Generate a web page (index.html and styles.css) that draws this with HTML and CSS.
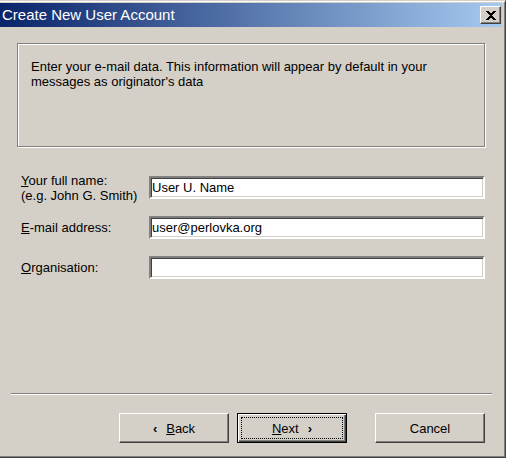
FILE: index.html
```html
<!DOCTYPE html>
<html lang="en">
<head>
    <meta charset="UTF-8">
    <title>Create New User Account</title>
    <link rel="stylesheet" href="styles.css">
</head>
<body>
    <div class="window">
        <div class="titlebar">
            <span class="title">Create New User Account</span>
            <button class="close" title="Close">
                <svg width="10" height="9" viewBox="0 0 10 9" shape-rendering="crispEdges">
                    <path d="M0 0h3v1h-3zM7 0h3v1h-3zM1 1h3v1h-3zM6 1h3v1h-3zM2 2h6v1h-6zM3 3h4v1h-4zM4 4h2v1h-2zM3 5h4v1h-4zM2 6h6v1h-6zM1 7h3v1h-3zM6 7h3v1h-3zM0 8h3v1h-3zM7 8h3v1h-3z" fill="#000"/>
                </svg>
            </button>
        </div>

        <div class="intro">
            Enter your e-mail data. This information will appear by default in your<br>
            messages as originator's data
        </div>

        <div class="form">
            <div class="row">
                <label class="label"><u>Y</u>our full name:<br>(e.g. John G. Smith)</label>
                <input class="field" type="text" value="User U. Name">
            </div>
            <div class="row">
                <label class="label"><u>E</u>-mail address:</label>
                <input class="field" type="text" value="user@perlovka.org">
            </div>
            <div class="row">
                <label class="label"><u>O</u>rganisation:</label>
                <input class="field" type="text" value="">
            </div>
        </div>

        <div class="footer">
            <div class="separator"></div>
            <div class="buttons">
                <button class="btn"><span class="arrow">&lsaquo;</span><u>B</u>ack</button>
                <button class="btn btn-default"><span class="focus"><u>N</u>ext<span class="arrow arrow-right">&rsaquo;</span></span></button>
                <button class="btn btn-cancel">Cancel</button>
            </div>
        </div>
    </div>
</body>
</html>
```

FILE: styles.css
```css
html, body {
    margin: 0;
    padding: 0;
}
body {
    width: 506px;
    height: 458px;
    overflow: hidden;
    background-color: #d4d0c8;
    font-family: 'Liberation Sans', Arial, sans-serif;
    font-size: 13px;
    color: #000;
}
.window {
    width: 506px;
    height: 458px;
    box-sizing: border-box;
    display: flex;
    flex-direction: column;
    padding-top: 2px;
    border-top: 1px solid #d4d0c8;
    border-right: 1px solid #404040;
    border-bottom: 1px solid #404040;
    box-shadow: inset 0 1px #fff, inset -1px -1px #808080;
}
.titlebar {
    height: 24px;
    margin-right: 3px;
    display: flex;
    align-items: center;
    justify-content: space-between;
    background: linear-gradient(to right, #0a246a, #a6caf0);
}
.title {
    padding-left: 2px;
    color: #fff;
    font-size: 15px;
    line-height: 24px;
    white-space: nowrap;
}
.close {
    width: 21px;
    height: 18px;
    margin-right: 1px;
    padding: 0;
    display: flex;
    align-items: center;
    justify-content: center;
    background-color: #d4d0c8;
    border: 1px solid;
    border-color: #fff #404040 #404040 #fff;
    box-shadow: inset -1px -1px #808080;
}
.close svg {
    display: block;
}
/* etched frame */
.intro {
    height: 104px;
    margin: 16px 0 0 17px;
    width: 468px;
    box-sizing: border-box;
    padding: 15px 10px 0 13px;
    border: 1px solid #808080;
    box-shadow: 1px 1px #fff, inset 1px 1px #fff;
    line-height: 15px;
    white-space: nowrap;
}
.form {
    margin-top: 29px;
    padding-left: 21px;
}
.row {
    height: 23px;
    display: flex;
    align-items: center;
    margin-bottom: 17px;
}
.label {
    width: 128px;
    flex: none;
    line-height: 15px;
}
.field {
    width: 336px;
    height: 23px;
    box-sizing: border-box;
    margin: 0;
    padding: 0 0 0 1px;
    font-family: inherit;
    font-size: 13px;
    color: #000;
    background-color: #fff;
    border: 2px solid;
    border-color: #808080 #fff #fff #808080;
    box-shadow: inset 1px 1px #404040, inset -1px -1px #d4d0c8;
    outline: none;
}
.footer {
    margin-top: auto;
    padding-bottom: 14px;
}
.separator {
    margin: 0 13px 0 11px;
    border-top: 1px solid #808080;
    border-bottom: 1px solid #fff;
}
.buttons {
    margin-top: 18px;
    padding-right: 20px;
    display: flex;
    justify-content: flex-end;
}
.btn {
    width: 110px;
    height: 30px;
    margin: 0 0 0 8px;
    padding: 0;
    display: flex;
    align-items: center;
    justify-content: center;
    font-family: inherit;
    font-size: 13px;
    color: #000;
    background-color: #d4d0c8;
    border: 1px solid;
    border-color: #fff #404040 #404040 #fff;
    box-shadow: inset -1px -1px #808080;
}
.btn-default {
    padding: 3px;
    border: 1px solid #000;
    box-shadow: inset 1px 1px #fff, inset -1px -1px #404040, inset -2px -2px #808080;
}
.btn-default .focus {
    flex: 1;
    align-self: stretch;
    display: flex;
    align-items: center;
    justify-content: center;
    border: 1px dotted #000;
}
.btn-cancel {
    margin-left: 28px;
}
.arrow {
    font-weight: bold;
    margin-right: 9px;
}
.arrow-right {
    margin-right: 0;
    margin-left: 9px;
}
```
